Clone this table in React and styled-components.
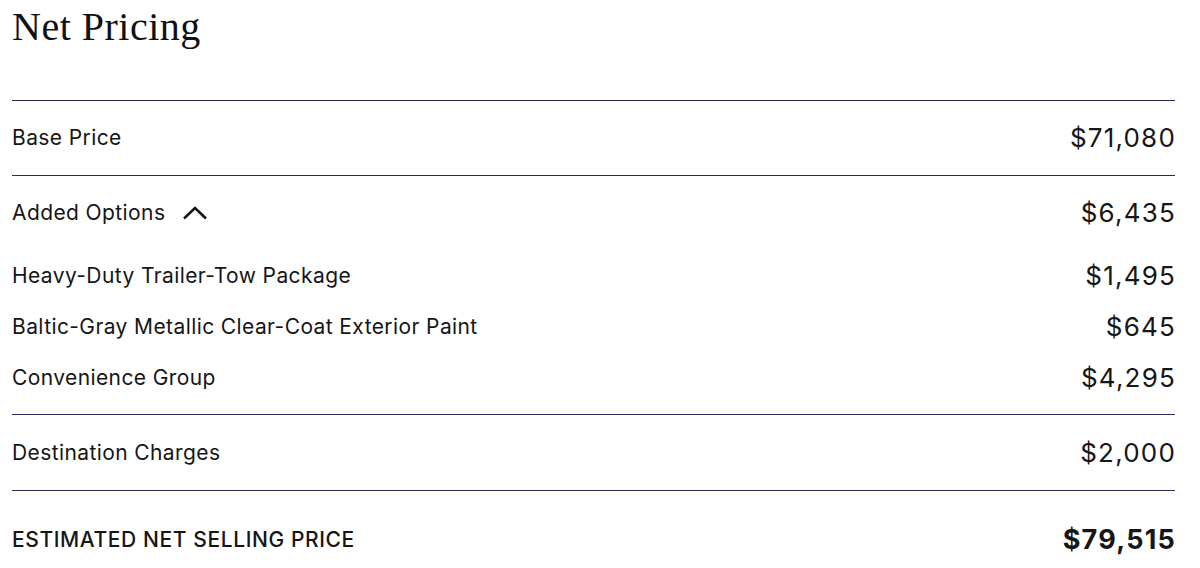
import React from "react";
import { createGlobalStyle, styled } from "styled-components";

const GlobalStyle = createGlobalStyle`
  body {
    margin: 0;
    background: #fff;
    color: #161616;
    font-family: Inter, "Noto Sans", "Liberation Sans", sans-serif;
  }
`;

const options = [
  { name: "Heavy-Duty Trailer-Tow Package", price: "$1,495" },
  { name: "Baltic-Gray Metallic Clear-Coat Exterior Paint", price: "$645" },
  { name: "Convenience Group", price: "$4,295" },
];

const ChevronUp = () => (
  <svg width="26" height="14" viewBox="0 0 26 14" fill="none">
    <path d="M2 12.5 L13 2 L24 12.5" stroke="#161616" strokeWidth="2.6" />
  </svg>
);

const App = () => {
  return (
    <Wrapper>
      <GlobalStyle />
      <Title>Net Pricing</Title>
      <Section $pt={23} $pb={23}>
        <Row>
          <Label>Base Price</Label>
          <Price>$71,080</Price>
        </Row>
      </Section>
      <Section $pt={23} $pb={22}>
        <Row>
          <Toggle>
            Added Options
            <ChevronUp />
          </Toggle>
          <Price>$6,435</Price>
        </Row>
        <OptionList>
          {options.map((o) => (
            <Row key={o.name}>
              <Label>{o.name}</Label>
              <Price>{o.price}</Price>
            </Row>
          ))}
        </OptionList>
      </Section>
      <Section $pt={24} $pb={23}>
        <Row>
          <Label>Destination Charges</Label>
          <Price>$2,000</Price>
        </Row>
      </Section>
      <Section $pt={35} $pb={20}>
        <Row>
          <TotalLabel>ESTIMATED NET SELLING PRICE</TotalLabel>
          <TotalPrice>$79,515</TotalPrice>
        </Row>
      </Section>
    </Wrapper>
  );
};

const Wrapper = styled.div`
  padding: 0 25px 0 12px;
`;

const Title = styled.h1`
  margin: 3px 0 49px;
  font-family: "Liberation Serif", serif;
  font-weight: 400;
  font-size: 40px;
  line-height: 48px;
  color: #111;
  letter-spacing: 0.5px;
`;

const Section = styled.div`
  border-top: 1px solid #2b2b58;
  padding-top: ${(p) => p.$pt}px;
  padding-bottom: ${(p) => p.$pb}px;
`;

const Row = styled.div`
  display: flex;
  justify-content: space-between;
  align-items: center;
  height: 28px;
`;

const Label = styled.span`
  font-size: 21px;
  letter-spacing: 0.4px;
  line-height: 28px;
`;

const Toggle = styled.span`
  display: flex;
  align-items: center;
  gap: 17px;
  font-size: 21px;
  letter-spacing: 0.4px;
  line-height: 28px;
  cursor: pointer;
`;

const Price = styled.span`
  font-size: 26px;
  letter-spacing: 1.2px;
  line-height: 28px;
  margin-right: -1px;
`;

const OptionList = styled.div`
  display: flex;
  flex-direction: column;
  gap: 23px;
  margin-top: 35px;
`;

const TotalLabel = styled.span`
  font-size: 21px;
  font-weight: 500;
  letter-spacing: 0.6px;
  line-height: 28px;
`;

const TotalPrice = styled.span`
  font-size: 27px;
  font-weight: 700;
  letter-spacing: 1.2px;
  line-height: 28px;
  margin-right: -1px;
`;

export default App;
